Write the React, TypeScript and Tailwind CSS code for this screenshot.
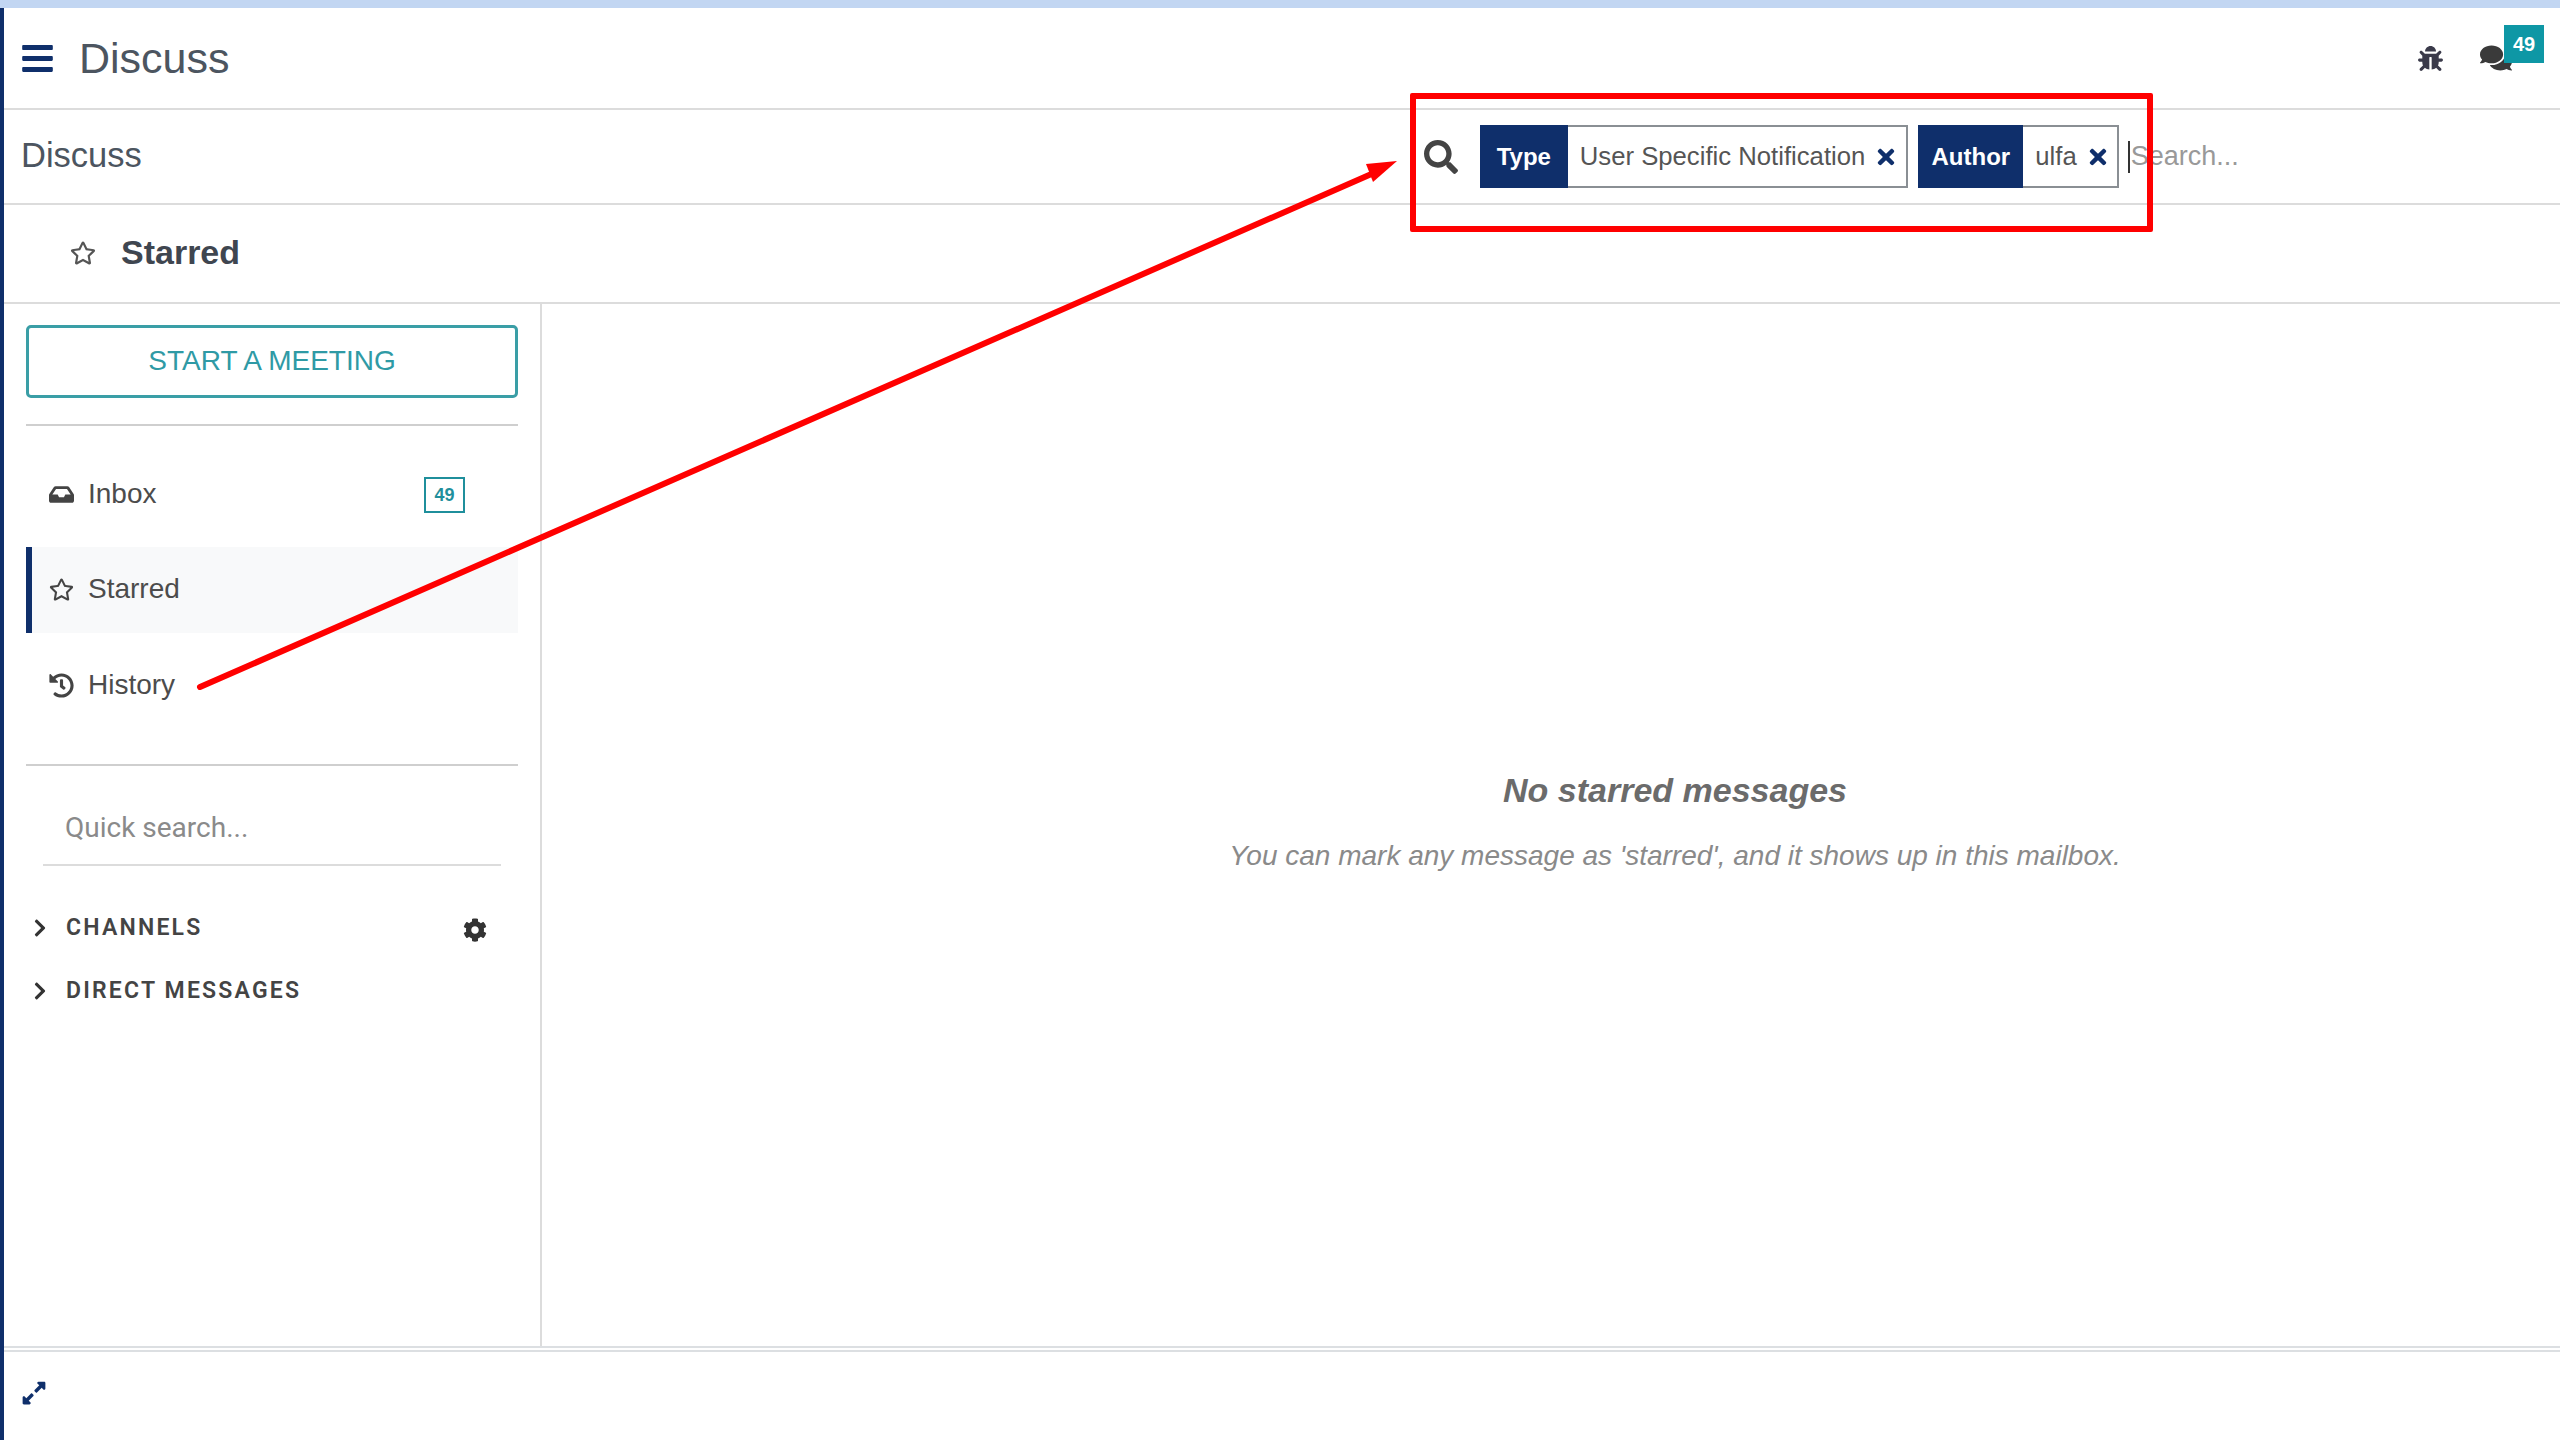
import React from 'react';
import { FaBars, FaRegStar, FaInbox, FaHistory, FaCog, FaBug, FaComments, FaTimes, FaSearch, FaExpandAlt, FaChevronRight } from 'react-icons/fa';

const NavRow: React.FC<{ icon: React.ReactNode; label: string; active?: boolean; badge?: string; shift?: string }> = ({ icon, label, active, badge, shift }) => (
  <div className={`flex items-center h-[86px] border-l-[6px] pl-[17px] pr-[53px] ${active ? 'border-[#0f2f6b] bg-[#f8f9fa]' : 'border-transparent'}`}>
    <span className={`w-[39px] text-[25px] text-[#444] ${shift ?? ''}`}>{icon}</span>
    <span className={`text-[28px] text-[#4c4c4c] ${shift ?? ''}`}>{label}</span>
    {badge && (
      <span className="ml-auto flex items-center justify-center w-[41px] h-[36px] border-2 border-[#1f8f9c] text-[18px] font-bold text-[#1f8f9c]">{badge}</span>
    )}
  </div>
);

const Facet: React.FC<{ name: string; value: string; labelClass: string; closeClass: string }> = ({ name, value, labelClass, closeClass }) => (
  <div className="flex items-stretch h-[63px] border-2 border-[#8a8f94] bg-white">
    <span className={`flex items-center justify-center -my-[2px] -ml-[2px] bg-[#0f2f6b] text-white text-[24px] font-bold ${labelClass}`}>{name}</span>
    <span className="flex items-center pl-[12px] pr-[9px] text-[25.7px] text-[#555]">{value}</span>
    <FaTimes className={`self-center text-[24px] text-[#0f2f6b] ${closeClass}`} />
  </div>
);

const App: React.FC = () => {
  return (
    <div className="relative w-[2560px] h-[1440px] overflow-hidden bg-white font-['Liberation_Sans',Arial,sans-serif]">
      <div className="h-[8px] bg-[#c2d6f2]" />
      <div className="flex flex-col h-[1432px] border-l-[4px] border-[#0f2f6b]">
        {/* top bar */}
        <div className="flex items-center h-[102px] border-b-2 border-[#dcdcdc] pl-[16px] pr-[16px]">
          <FaBars className="text-[35px] text-[#0f2f6b]" />
          <span className="ml-[24px] text-[43px] text-[#4c5560]">Discuss</span>
          <div className="ml-auto flex items-center">
            <FaBug className="text-[25px] text-[#3a3a4a]" />
            <div className="relative ml-[37px] mr-[32px]">
              <FaComments className="text-[32px] text-[#3a3a3a]" />
              <span className="absolute -top-[17px] left-[24px] flex items-center justify-center w-[40px] h-[38px] bg-[#0e97a5] text-white text-[20px] font-bold">49</span>
            </div>
          </div>
        </div>
        {/* breadcrumb + search */}
        <div className="flex items-center h-[95px] border-b-2 border-[#dcdcdc] pl-[17px]">
          <span className="-translate-y-px text-[34.5px] text-[#4c5560]">Discuss</span>
          <FaSearch className="ml-[1282px] text-[34px] text-[#444]" />
          <div className="ml-[22px] flex gap-[10px]">
            <Facet name="Type" value="User Specific Notification" labelClass="w-[88px]" closeClass="mr-[8px]" />
            <Facet name="Author" value="ulfa" labelClass="w-[105px]" closeClass="mr-[7px]" />
          </div>
          <span className="ml-[9px] h-[32px] w-[2px] bg-[#333]" />
          <span className="ml-[1px] text-[27px] text-[#999]">Search...</span>
        </div>
        {/* title */}
        <div className="flex items-center h-[99px] border-b-2 border-[#dcdcdc] pl-[66px] pb-[2px]">
          <FaRegStar className="text-[26px] text-[#555]" />
          <span className="ml-[25px] text-[34px] font-bold text-[#3f4650]">Starred</span>
        </div>
        {/* body */}
        <div className="flex flex-1 min-h-0">
          <aside className="w-[538px] border-r-2 border-[#dcdcdc] pt-[21px]">
            <div className="px-[22px]">
              <button className="w-full h-[73px] pb-[2px] border-[3px] border-[#3a9ea6] rounded-[5px] text-[28px] text-[#2f9aa5]">START A MEETING</button>
              <div className="mt-[26px] border-b-2 border-[#cfcfcf]" />
              <div className="mt-[26px] flex flex-col gap-[9px]">
                <NavRow icon={<FaInbox />} label="Inbox" badge="49" shift="-translate-y-px" />
                <NavRow icon={<FaRegStar />} label="Starred" active shift="-translate-y-px" />
                <NavRow icon={<FaHistory />} label="History" />
              </div>
              <div className="mt-[36px] border-b-2 border-[#cfcfcf]" />
            </div>
            <div className="mt-[42px] mx-[39px] pl-[22px] pb-[16px] border-b-2 border-[#dcdcdc] text-[28px] leading-[40px] text-[#8a8a8a] font-['Roboto',sans-serif]">Quick search...</div>
            <div className="mt-[48px] flex items-center h-[28px] pl-[26px] pr-[53px]">
              <FaChevronRight className="text-[20px] text-[#333]" />
              <span className="ml-[16px] text-[23px] font-semibold tracking-[2.2px] text-[#444] font-['Roboto',sans-serif]">CHANNELS</span>
              <FaCog className="ml-auto mt-[4px] text-[24px] text-[#333]" />
            </div>
            <div className="mt-[35px] flex items-center h-[28px] pl-[26px]">
              <FaChevronRight className="text-[20px] text-[#333]" />
              <span className="ml-[16px] text-[23px] font-semibold tracking-[2.2px] text-[#444] font-['Roboto',sans-serif]">DIRECT MESSAGES</span>
            </div>
          </aside>
          <main className="flex-1 flex flex-col items-center pt-[464px] pl-[248px]">
            <div className="text-[34px] leading-[44px] font-bold italic text-[#6b6b6b]">No starred messages</div>
            <div className="mt-[22px] text-[28px] leading-[44px] italic text-[#8a8a8a]">You can mark any message as 'starred', and it shows up in this mailbox.</div>
          </main>
        </div>
        {/* bottom */}
        <div className="h-[94px] border-t-2 border-[#dcdfe2]">
          <div className="h-[90px] border-t-2 border-[#dcdfe2] mt-[2px] pt-[28px] pl-[17px]">
            <FaExpandAlt className="text-[26px] text-[#0f2f6b]" />
          </div>
        </div>
      </div>
      {/* annotation drawn on top of the screenshot */}
      <svg className="absolute left-0 top-0 pointer-events-none" width="2560" height="1440" viewBox="0 0 2560 1440">
        <line x1="200" y1="687" x2="1376" y2="172" stroke="#f00" strokeWidth="6" strokeLinecap="round" />
        <polygon points="1397,161 1366,164 1373,182" fill="#f00" />
      </svg>
      <div className="absolute left-[1410px] top-[93px] w-[743px] h-[139px] border-[6px] border-[#f00] rounded-[2px] pointer-events-none" />
    </div>
  );
};

export default App;
